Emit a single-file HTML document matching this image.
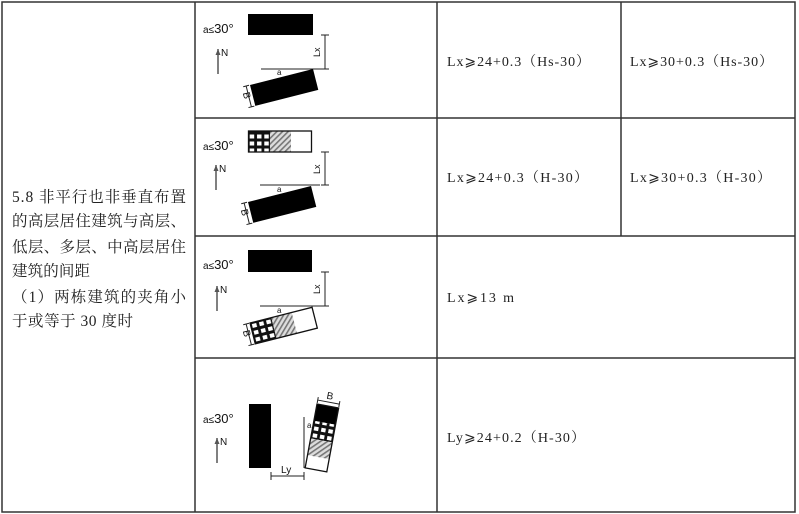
<!DOCTYPE html>
<html><head><meta charset="utf-8"><style>
html,body{margin:0;padding:0;background:#fff;}
svg{display:block}
.t{font-family:"Liberation Serif","Noto Serif CJK SC",serif;font-size:14px;fill:#222}
.c{font-family:"Liberation Serif","Noto Serif CJK SC",serif;font-size:15.5px;fill:#222}
.s{font-family:"Liberation Sans",sans-serif;fill:#111}
</style></head><body>
<svg width="799" height="514" viewBox="0 0 799 514" xmlns="http://www.w3.org/2000/svg">
<defs>
<pattern id="h" width="4" height="4" patternUnits="userSpaceOnUse" patternTransform="rotate(45)">
<rect width="4" height="4" fill="#ddd"/><rect width="1.6" height="4" fill="#777"/>
</pattern>
<pattern id="g" width="7.3" height="7" patternUnits="userSpaceOnUse">
<rect width="7.3" height="7" fill="#111"/><rect x="1.5" y="1.5" width="4.5" height="4" fill="#fff"/>
</pattern>
<g id="arr"><line x1="0" y1="0" x2="0" y2="25" stroke="#555" stroke-width="1.5"/><path d="M-2.5,6 L0,0 L2.5,6 Z" fill="#555"/></g>
</defs>
<g stroke="#333" stroke-width="1.5" fill="none">
<rect x="2" y="2" width="793" height="510"/>
<line x1="195" y1="2" x2="195" y2="512"/>
<line x1="437" y1="2" x2="437" y2="512"/>
<line x1="621" y1="2" x2="621" y2="236"/>
<line x1="195" y1="118" x2="795" y2="118"/>
<line x1="195" y1="236" x2="795" y2="236"/>
<line x1="195" y1="358" x2="795" y2="358"/>
</g>
<text class="c" x="12" y="202" textLength="174">5.8 非平行也非垂直布置</text>
<text class="c" x="12" y="226" textLength="174">的高层居住建筑与高层、</text>
<text class="c" x="12" y="252" textLength="174">低层、多层、中高层居住</text>
<text class="c" x="12" y="276" textLength="78">建筑的间距</text>
<text class="c" x="12" y="302" textLength="174">（1）两栋建筑的夹角小</text>
<text class="c" x="12" y="326" textLength="121">于或等于 30 度时</text>
<text class="t" x="447" y="66" textLength="143">Lx⩾24+0.3（Hs-30）</text>
<text class="t" x="630" y="66" textLength="143">Lx⩾30+0.3（Hs-30）</text>
<text class="t" x="447" y="182" textLength="141">Lx⩾24+0.3（H-30）</text>
<text class="t" x="630" y="182" textLength="141">Lx⩾30+0.3（H-30）</text>
<text class="t" x="447" y="302" textLength="67">Lx⩾13 m</text>
<text class="t" x="447" y="442" textLength="138">Ly⩾24+0.2（H-30）</text>

<!-- Row1 -->
<text class="s" x="203" y="33" font-size="10">a≤<tspan font-size="13">30°</tspan></text>
<use href="#arr" x="218" y="49"/><text class="s" x="221" y="56" font-size="10">N</text>
<rect x="248" y="14" width="65" height="21" fill="#000"/>
<g stroke="#222" stroke-width="1"><line x1="325" y1="35" x2="325" y2="69"/><line x1="321" y1="35" x2="329" y2="35"/><line x1="321" y1="69" x2="329" y2="69"/><line x1="261" y1="69" x2="328" y2="69"/></g>
<text class="s" font-size="9" transform="translate(320,57) rotate(-90)">Lx</text>
<text class="s" x="277" y="75" font-size="8">a</text>
<g transform="translate(250,85) rotate(-14.2)"><rect width="65" height="21.5" fill="#000"/><line x1="-4" y1="0" x2="-4" y2="21.5" stroke="#222"/><line x1="-7" y1="0" x2="-1" y2="0" stroke="#222"/><line x1="-7" y1="21.5" x2="-1" y2="21.5" stroke="#222"/><text class="s" font-size="10" transform="translate(-9,6) rotate(90)">B</text></g>

<!-- Row2 -->
<text class="s" x="203" y="150" font-size="10">a≤<tspan font-size="13">30°</tspan></text>
<use href="#arr" x="216" y="165"/><text class="s" x="219" y="172" font-size="10">N</text>
<rect x="248" y="131" width="22" height="21" fill="url(#g)"/>
<rect x="270" y="131" width="21" height="21" fill="url(#h)"/>
<rect x="248.5" y="131" width="63" height="21" fill="none" stroke="#111" stroke-width="1.3"/>
<g stroke="#222" stroke-width="1"><line x1="325" y1="152" x2="325" y2="185"/><line x1="321" y1="152" x2="329" y2="152"/><line x1="321" y1="185" x2="329" y2="185"/><line x1="260" y1="185" x2="320" y2="185"/></g>
<text class="s" font-size="9" transform="translate(320,174) rotate(-90)">Lx</text>
<text class="s" x="277" y="192" font-size="8">a</text>
<g transform="translate(248,202) rotate(-14.2)"><rect width="65" height="21.5" fill="#000"/><line x1="-4" y1="0" x2="-4" y2="21.5" stroke="#222"/><line x1="-7" y1="0" x2="-1" y2="0" stroke="#222"/><line x1="-7" y1="21.5" x2="-1" y2="21.5" stroke="#222"/><text class="s" font-size="10" transform="translate(-9,6) rotate(90)">B</text></g>

<!-- Row3 -->
<text class="s" x="203" y="269" font-size="10">a≤<tspan font-size="13">30°</tspan></text>
<use href="#arr" x="217" y="286"/><text class="s" x="220" y="293" font-size="10">N</text>
<rect x="248" y="250" width="64" height="22" fill="#000"/>
<g stroke="#222" stroke-width="1"><line x1="325" y1="272" x2="325" y2="306"/><line x1="321" y1="272" x2="329" y2="272"/><line x1="321" y1="306" x2="329" y2="306"/><line x1="260" y1="306" x2="322" y2="306"/></g>
<text class="s" font-size="9" transform="translate(320,294) rotate(-90)">Lx</text>
<text class="s" x="277" y="313" font-size="8">a</text>
<g transform="translate(250,323) rotate(-14.2)"><rect width="22" height="21.5" fill="url(#g)"/><rect x="22" width="21" height="21.5" fill="url(#h)"/><rect width="64" height="21.5" fill="none" stroke="#111" stroke-width="1.3"/><line x1="-4" y1="0" x2="-4" y2="21.5" stroke="#222"/><line x1="-7" y1="0" x2="-1" y2="0" stroke="#222"/><line x1="-7" y1="21.5" x2="-1" y2="21.5" stroke="#222"/><text class="s" font-size="10" transform="translate(-9,6) rotate(90)">B</text></g>

<!-- Row4 -->
<text class="s" x="203" y="423" font-size="10">a≤<tspan font-size="13">30°</tspan></text>
<use href="#arr" x="217" y="438"/><text class="s" x="220" y="445" font-size="10">N</text>
<rect x="249" y="404" width="22" height="64" fill="#000"/>
<g stroke="#222" stroke-width="1"><line x1="271" y1="476" x2="304" y2="476"/><line x1="271" y1="472" x2="271" y2="480"/><line x1="304" y1="472" x2="304" y2="480"/><line x1="304" y1="417" x2="304" y2="468"/></g>
<text class="s" x="281" y="473" font-size="10">Ly</text>
<text class="s" x="307" y="428" font-size="8">a</text>
<g transform="translate(317,404) rotate(10.5)"><rect width="22" height="17" fill="#000"/><rect y="17" width="22" height="18" fill="url(#g)"/><rect y="35" width="22" height="17" fill="url(#h)"/><rect width="22" height="65" fill="none" stroke="#111" stroke-width="1.3"/><line x1="0" y1="-4" x2="22" y2="-4" stroke="#222"/><line x1="0" y1="-7" x2="0" y2="-1" stroke="#222"/><line x1="22" y1="-7" x2="22" y2="-1" stroke="#222"/><text class="s" font-size="10" x="8" y="-7">B</text></g>
</svg>
</body></html>
